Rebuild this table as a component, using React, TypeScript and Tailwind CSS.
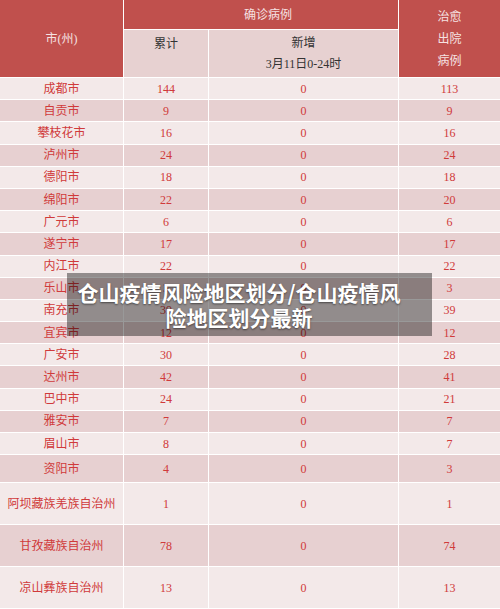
import React from "react";

const rows: [string, string, string, string, number][] = [
  ["成都市", "144", "0", "113", 0],
  ["自贡市", "9", "0", "9", 0],
  ["攀枝花市", "16", "0", "16", 0],
  ["泸州市", "24", "0", "24", 0],
  ["德阳市", "18", "0", "18", 0],
  ["绵阳市", "22", "0", "20", 0],
  ["广元市", "6", "0", "6", 0],
  ["遂宁市", "17", "0", "17", 0],
  ["内江市", "22", "0", "22", 0],
  ["乐山市", "3", "0", "3", 0],
  ["南充市", "39", "0", "39", 0],
  ["宜宾市", "12", "0", "12", 0],
  ["广安市", "30", "0", "28", 0],
  ["达州市", "42", "0", "41", 0],
  ["巴中市", "24", "0", "21", 0],
  ["雅安市", "7", "0", "7", 0],
  ["眉山市", "8", "0", "7", 0],
  ["资阳市", "4", "0", "3", 1],
  ["阿坝藏族羌族自治州", "1", "0", "1", 2],
  ["甘孜藏族自治州", "78", "0", "74", 2],
  ["凉山彝族自治州", "13", "0", "13", 2],
];

const font = { fontFamily: '"Liberation Serif", "Noto Sans CJK SC", serif' };

export default function App() {
  return (
    <div className="relative w-[500px] h-[609px] overflow-hidden bg-white" style={font}>
      <div className="grid grid-cols-[123px_84px_189px_1fr] gap-px bg-white text-[12px]">
        <div className="row-span-2 bg-[#c0504d] text-[#f6e2e2] flex items-center justify-center h-[77px]">
          市(州)
        </div>
        <div className="col-span-2 bg-[#c0504d] text-[#f6e2e2] flex items-center justify-center h-[29px] pl-[14px]">
          确诊病例
        </div>
        <div className="row-span-2 bg-[#c0504d] text-[#f6e2e2] flex flex-col items-center justify-center leading-[22px]">
          <span>治愈</span>
          <span>出院</span>
          <span>病例</span>
        </div>
        <div className="bg-[#e7d1d1] text-[#333] flex items-start justify-center pt-[5px] h-[47px] -mt-px">
          累计
        </div>
        <div className="bg-[#e7d1d1] text-[#333] flex flex-col items-center pt-[3px] leading-[21px] h-[47px] -mt-px">
          <span>新增</span>
          <span>3月11日0-24时</span>
        </div>
        {rows.map(([name, a, b, c, t], i) => {
          const bg = i % 2 === 0 ? "bg-[#f3e9e9]" : "bg-[#e7d0d1]";
          const h = t === 0 ? "h-[21.2px]" : t === 1 ? "h-[27px]" : "h-[41px]";
          const cell = `${bg} ${h} flex items-center justify-center text-[#d03a3a]`;
          return (
            <React.Fragment key={i}>
              <div className={cell}>{name}</div>
              <div className={cell}>{a}</div>
              <div className={cell}>{b}</div>
              <div className={cell}>{c}</div>
            </React.Fragment>
          );
        })}
      </div>
      <div className="absolute left-[67px] top-[273px] w-[365px] h-[63px] bg-black/40 flex items-center pl-[6px] pr-[27px]">
        <p
          className="w-full text-center text-white font-bold text-[21px] leading-[25px] [text-shadow:0_1px_2px_rgba(0,0,0,0.5)]"
          style={{ fontFamily: '"Noto Sans CJK SC", sans-serif' }}
        >
          仓山疫情风险地区划分/仓山疫情风险地区划分最新
        </p>
      </div>
    </div>
  );
}
